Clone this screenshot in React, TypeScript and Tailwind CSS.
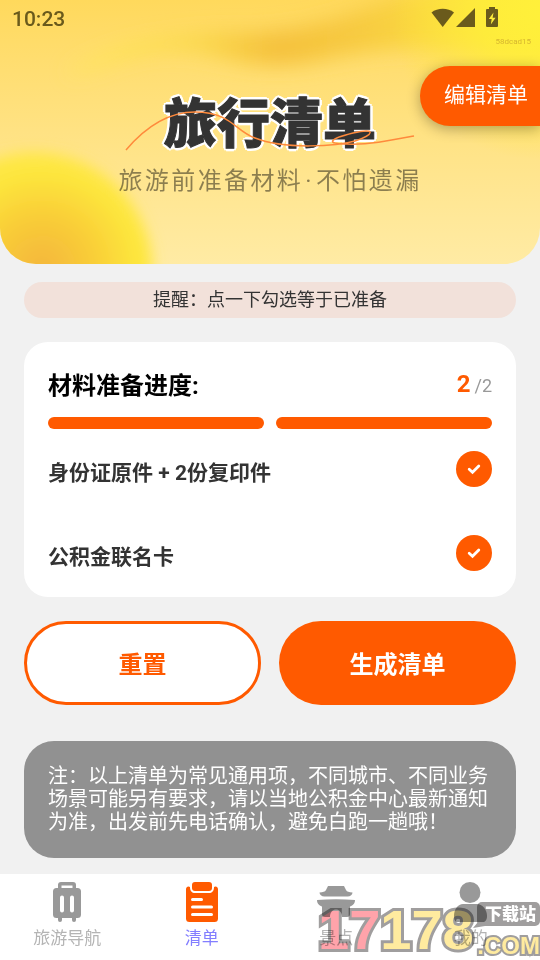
import { useState } from 'react'
import type { ReactNode } from 'react'

type Item = { id: string; name: string; done: boolean }

const INITIAL_ITEMS: Item[] = [
  { id: 'id-card', name: '身份证原件 + 2份复印件', done: true },
  { id: 'fund-card', name: '公积金联名卡', done: true },
]

export default function App() {
  const [items, setItems] = useState(INITIAL_ITEMS)
  const doneCount = items.filter(i => i.done).length

  const toggle = (id: string) =>
    setItems(items.map(i => (i.id === id ? { ...i, done: !i.done } : i)))

  return (
    <div className="min-h-screen flex flex-col bg-[#f1f1f1] text-[#333] font-[Roboto,'Noto_Sans_CJK_SC',sans-serif]">
      <Header />

      <main className="px-6 pt-[18px] pb-4">
        <p className="h-9 leading-9 rounded-full bg-[#f2e1da] text-center text-[18px]">
          提醒：点一下勾选等于已准备
        </p>

        <section className="mt-6 rounded-[24px] bg-white px-6 pt-6 pb-[26px]">
          <div className="h-[39px] flex items-start justify-between">
            <h2 className="text-[24px] leading-10 font-bold text-black">材料准备进度:</h2>
            <p className="flex items-baseline gap-1 leading-9">
              <span className="text-[24px] font-bold text-[#ff5a00]">{doneCount}</span>
              <span className="text-[18px] text-[#999]">/{items.length}</span>
            </p>
          </div>
          <div className="mt-3 grid grid-flow-col auto-cols-fr gap-3">
            {items.map((item, i) => (
              <div
                key={item.id}
                className={`h-3 rounded-full ${i < doneCount ? 'bg-[#ff5a00]' : 'bg-[#eee]'}`}
              />
            ))}
          </div>
          <ul className="mt-[22px] space-y-12">
            {items.map(item => (
              <li key={item.id} className="h-9 flex items-end justify-between">
                <label htmlFor={item.id} className="text-[21px] leading-7 font-bold">
                  {item.name}
                </label>
                <span className="relative size-9">
                  <input
                    id={item.id}
                    type="checkbox"
                    checked={item.done}
                    onChange={() => toggle(item.id)}
                    className="block size-9 appearance-none rounded-full bg-[#ddd] checked:bg-[#ff5a00]"
                  />
                  <svg className="absolute inset-0 pointer-events-none" viewBox="0 0 36 36" fill="none">
                    <path d="M13.200 18.300 16.500 21.300 22.800 15" stroke="#fff" strokeWidth="2.8" strokeLinecap="round" />
                  </svg>
                </span>
              </li>
            ))}
          </ul>
        </section>

        <div className="mt-6 grid grid-cols-2 gap-[18px]">
          <button
            type="button"
            onClick={() => setItems(items.map(i => ({ ...i, done: false })))}
            className="h-[84px] rounded-full border-3 border-[#ff5a00] bg-white pt-1 text-[24px] font-bold text-[#ff5a00]"
          >
            重置
          </button>
          <button type="button" className="h-[84px] rounded-full bg-[#ff5a00] pt-1 text-[24px] font-bold text-white">
            生成清单
          </button>
        </div>

        <p className="mt-9 rounded-[30px] bg-[#919191] p-6 text-[20px] leading-[23px] text-white">
          注：以上清单为常见通用项，不同城市、不同业务场景可能另有要求，请以当地公积金中心最新通知为准，出发前先电话确认，避免白跑一趟哦！
        </p>
      </main>

      <div className="relative mt-auto">
        <nav className="h-[86px] flex bg-white pr-[2px]">
          <TabLink label="旅游导航" icon={<SuitcaseIcon />} />
          <TabLink label="清单" icon={<ClipboardIcon />} active />
          <TabLink label="景点" icon={<PavilionIcon />} />
          <TabLink label="我的" icon={<PersonIcon />} />
        </nav>
        <Watermark />
      </div>
    </div>
  )
}

function Header() {
  return (
    <header className="relative h-[264px] overflow-hidden rounded-b-[36px] bg-linear-to-b from-[#ffd95c] to-[#ffeba4]">
      <Glow />
      <div className="relative">
        <div className="h-9 pl-3 pr-10 flex items-center justify-between text-[#6a5a1c]">
          <span className="pt-1 text-[21px] font-medium">10:23</span>
          <StatusIcons />
        </div>
        <p className="pr-[9px] text-right text-[8px] leading-3 text-[#d6b62f]">58dcad15</p>
        <div className="mt-[45px] text-center">
          <h1 className="relative text-[53px] leading-[64px] font-black">
            <span className="[-webkit-text-stroke:1px_#333] [text-shadow:3px_0_#fff,-3px_0_#fff,0_3px_#fff,0_-3px_#fff,2px_2px_#fff,-2px_2px_#fff,2px_-2px_#fff,-2px_-2px_#fff]">
              旅行清单
            </span>
            <svg
              className="absolute left-1/2 top-[15px] -translate-x-1/2"
              width="290"
              height="44"
              viewBox="0 0 290 44"
              fill="none"
            >
              <path
                d="M1 42C23 16 47 4 70 4C106 4 110 23 130 30C160 42 213 38 230 33C249 27 252 19 228 25C204 31 200 36 222 36C244 37 268 32 289 28"
                stroke="#ff8a3c"
                strokeWidth="1.5"
              />
            </svg>
          </h1>
          <p className="mt-1 text-[24px] leading-10 tracking-widest text-black/45">
            旅游前准备材料<span className="px-[2px]">·</span>不怕遗漏
          </p>
        </div>
      </div>
      <button
        type="button"
        className="absolute right-0 top-[66px] h-[60px] rounded-l-full bg-[#ff5a00] pl-6 pr-3 text-[21px] text-white shadow-[0_3px_14px_rgba(0,0,0,0.3)]"
      >
        编辑清单
      </button>
    </header>
  )
}

// soft yellow and amber patches behind the title
function Glow() {
  return (
    <svg
      className="absolute inset-0 size-full"
      viewBox="0 0 540 264"
      preserveAspectRatio="none"
      fill="none"
    >
      <defs>
        <radialGradient id="sun" gradientUnits="userSpaceOnUse" cx="42" cy="268" r="118">
          <stop offset="0" stopColor="#f4b63c" />
          <stop offset="0.45" stopColor="#f9ce38" />
          <stop offset="0.8" stopColor="#fde63c" />
          <stop offset="1" stopColor="#ffe84c" />
        </radialGradient>
        <linearGradient id="streak" gradientUnits="userSpaceOnUse" x1="60" y1="0" x2="540" y2="0">
          <stop offset="0" stopColor="#ffe860" />
          <stop offset="0.15" stopColor="#fde34c" />
          <stop offset="0.3" stopColor="#fad648" />
          <stop offset="0.45" stopColor="#f5c13c" />
          <stop offset="0.62" stopColor="#f7ca40" />
          <stop offset="0.8" stopColor="#fbdb40" />
          <stop offset="1" stopColor="#fee93c" />
        </linearGradient>
        <radialGradient id="corner" gradientUnits="userSpaceOnUse" cx="540" cy="10" r="150">
          <stop offset="0" stopColor="#fff03a" />
          <stop offset="0.4" stopColor="#ffee3a" stopOpacity="0.8" />
          <stop offset="1" stopColor="#ffe53c" stopOpacity="0" />
        </radialGradient>
        <filter id="soft" filterUnits="userSpaceOnUse" x="-100" y="-100" width="800" height="500">
          <feGaussianBlur stdDeviation="10" />
        </filter>
        <filter id="softSun" filterUnits="userSpaceOnUse" x="-200" y="60" width="500" height="460">
          <feGaussianBlur stdDeviation="7" />
        </filter>
      </defs>
      <path
        d="M66 74C110 44 170 32 250 32C310 30 350 14 400 -4L600 -40V70C500 42 400 42 330 58C240 80 220 44 160 50C120 54 90 72 66 74Z"
        fill="url(#streak)"
        filter="url(#soft)"
      />
      <rect x="380" width="160" height="160" fill="url(#corner)" />
      <circle cx="34" cy="271" r="119" fill="url(#sun)" filter="url(#softSun)" />
    </svg>
  )
}

function StatusIcons() {
  return (
    <svg width="70" height="22" viewBox="0 0 70 22" fill="currentColor" aria-hidden="true">
      <path d="M1.500 5.500C7.500 0.500 18 0.500 24 5.500L12.700 20Z" />
      <path d="M26 20 45 1V20Z" />
      <path
        fillRule="evenodd"
        d="M59 0h6v2h2a1 1 0 0 1 1 1v16a1 1 0 0 1-1 1H57a1 1 0 0 1-1-1V3a1 1 0 0 1 1-1h2ZM63.500 5.500 58.800 12h2.900l-.9 5.500 4.800-6.800h-3Z"
      />
    </svg>
  )
}

function TabLink({ label, icon, active }: { label: string; icon: ReactNode; active?: boolean }) {
  return (
    <a
      href="#"
      className={`flex-1 pt-2 flex flex-col items-center ${active ? 'text-[#ff5a00]' : 'text-[#999]'}`}
    >
      {icon}
      <span className={`mt-1 text-[17px] leading-6 ${active ? 'text-[#837eff]' : 'text-[#b4b4b4]'}`}>
        {label}
      </span>
    </a>
  )
}

function SuitcaseIcon() {
  return (
    <svg width="40" height="40" viewBox="0 0 40 40" fill="currentColor" aria-hidden="true">
      <path
        fillRule="evenodd"
        d="M14 0h12a3 3 0 0 1 3 3v3h1.500a3.500 3.500 0 0 1 3.500 3.500v23a3.500 3.500 0 0 1-3.500 3.500H29v2a2 2 0 0 1-4 0v-2H15v2a2 2 0 0 1-4 0v-2H9.500A3.500 3.500 0 0 1 6 32.500v-23A3.500 3.500 0 0 1 9.500 6H11V3a3 3 0 0 1 3-3ZM14.500 3.500V6h11V3.500ZM13 15.500v13a2 2 0 0 0 4 0v-13a2 2 0 0 0-4 0ZM23 15.500v13a2 2 0 0 0 4 0v-13a2 2 0 0 0-4 0Z"
      />
    </svg>
  )
}

function ClipboardIcon() {
  return (
    <svg width="40" height="40" viewBox="0 0 40 40" fill="none" aria-hidden="true">
      <path
        fill="currentColor"
        d="M4 7a2.500 2.500 0 0 1 4-2c0 4 2 6 5 6h14c3 0 5-2 5-6a2.500 2.500 0 0 1 4 2v29.500a3.500 3.500 0 0 1-3.500 3.500h-25A3.500 3.500 0 0 1 4 36.500Z"
      />
      <rect x="10" width="20" height="9" rx="3" fill="currentColor" />
      <path d="M10.500 17.500h9M10.500 25h19M10.500 32.500h19" stroke="#fff" strokeWidth="3" strokeLinecap="round" />
    </svg>
  )
}

function PavilionIcon() {
  return (
    <svg width="40" height="40" viewBox="0 0 40 40" fill="currentColor" aria-hidden="true">
      <path d="M12 4h16l2 4c1 2 3 2 6.500 2.500 0 2-2 4-5 4h-23c-3 0-5-2-5-4C7 10 9 10 10 8Z" />
      <path d="M1 18q19-1.500 38 0c0 4-3 6-5 6.500V32c0 2-1 3-3 3h-5c0-10-12-10-12 0H9c-2 0-3-1-3-3V24.500c-2-.5-5-2.500-5-6.500Z" />
    </svg>
  )
}

function PersonIcon() {
  return (
    <svg width="40" height="40" viewBox="0 0 40 40" fill="currentColor" aria-hidden="true">
      <circle cx="19" cy="10.500" r="10.500" />
      <path d="M12 22h14c5 0 10 5 10 12 0 4-2 6-4 6H7c-3 0-4-2-4-6 0-7 4-12 9-12Z" />
    </svg>
  )
}

function Watermark() {
  return (
    <div className="absolute right-0 bottom-0 w-[224px] pointer-events-none mix-blend-multiply">
      <p className="pl-[2px] text-[56px] leading-[60px] font-bold font-['Liberation_Sans',sans-serif] text-[#ffeb9f] [-webkit-text-stroke:6px_#a09e9e] [paint-order:stroke_fill]">
        <span className="text-[#ffa3aa]">17</span>178
      </p>
      <div className="absolute right-0 top-[2px] rounded-[5px] bg-[#a09e9e] pl-2 pr-1">
        <p className="text-[17px] leading-6 font-black text-white">下载站</p>
        <svg className="absolute -left-1 top-4" width="12" height="10" viewBox="0 0 12 10" fill="#a09e9e">
          <path d="M5 0V4L0 10 12 8Z" />
        </svg>
      </div>
      <p className="absolute right-0 bottom-0 text-[24px] leading-7 font-bold font-['Liberation_Sans',sans-serif] text-[#ffeb9f] [-webkit-text-stroke:4px_#a09e9e] [paint-order:stroke_fill]">
        .COM
      </p>
    </div>
  )
}
